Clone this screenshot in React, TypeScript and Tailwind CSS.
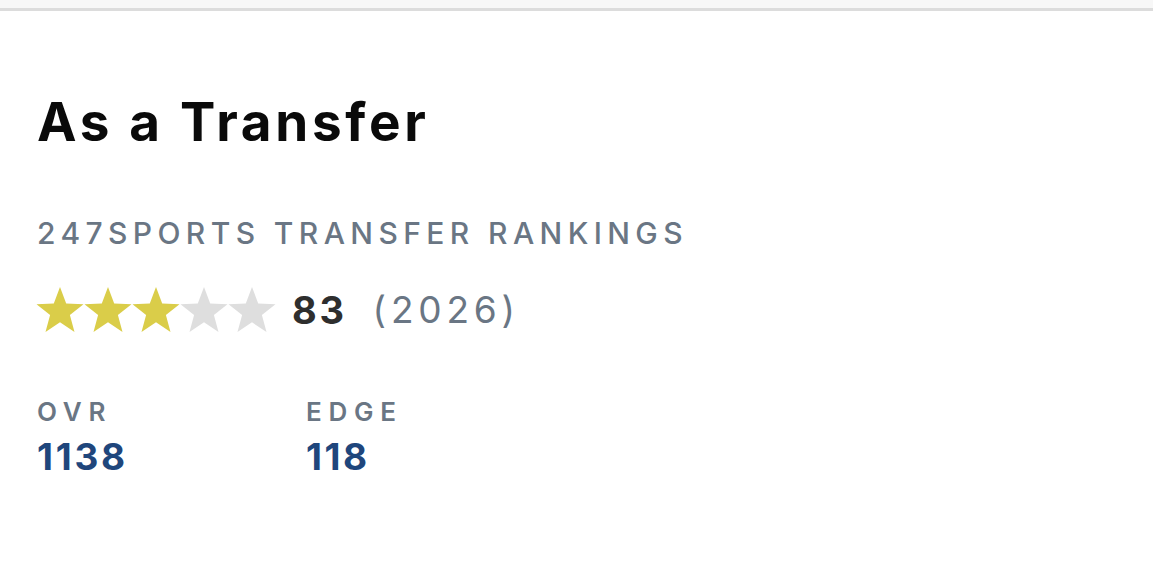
import React from "react";

function Star({ filled }: { filled: boolean }) {
  return (
    <svg width="48" height="46" viewBox="0 0 48 46">
      <polygon
        points="24,0 30.2,16.4 47.5,17.2 33.9,28.1 38.5,45 24,35.3 9.5,45 14.1,28.1 0.5,17.2 17.8,16.4"
        fill={filled ? "#dacd49" : "#dedede"}
      />
    </svg>
  );
}

export default function App() {
  const font = { fontFamily: "Inter, Lato, sans-serif" };
  return (
    <div className="w-[1153px] h-[581px] bg-white overflow-hidden" style={font}>
      <div className="h-[8px] bg-[#f7f7f7]" />
      <div className="h-[3px] bg-[#dcdcdc]" />
      <div className="pl-[37px] pt-[85px]">
        <h1 className="text-[53px] leading-[53px] font-bold text-[#0a0a0a] tracking-[0.07em]">
          As a Transfer
        </h1>
        <div className="mt-[69px] text-[30px] leading-[30px] text-[#6a7684] font-medium tracking-[0.18em]">
          247SPORTS TRANSFER RANKINGS
        </div>
        <div className="mt-[39px] flex items-center">
          <div className="flex -ml-[1px]">
            <Star filled />
            <Star filled />
            <Star filled />
            <Star filled={false} />
            <Star filled={false} />
          </div>
          <span className="ml-[16px] text-[38px] leading-[46px] font-bold text-[#2e2e2e] tracking-[0.07em]">83</span>
          <span className="ml-[26px] text-[37px] leading-[46px] text-[#6a7684] tracking-[0.13em]">(2026)</span>
        </div>
        <div className="mt-[66px] flex">
          <div className="w-[269px]">
            <div className="text-[26px] leading-[26px] font-semibold text-[#6a7684] tracking-[0.26em]">OVR</div>
            <div className="mt-[13px] text-[37px] leading-[37px] font-bold text-[#1f467c] tracking-[0.075em]">1138</div>
          </div>
          <div>
            <div className="text-[26px] leading-[26px] font-semibold text-[#6a7684] tracking-[0.26em]">EDGE</div>
            <div className="mt-[13px] text-[37px] leading-[37px] font-bold text-[#1f467c] tracking-[0.07em]">118</div>
          </div>
        </div>
      </div>
    </div>
  );
}
